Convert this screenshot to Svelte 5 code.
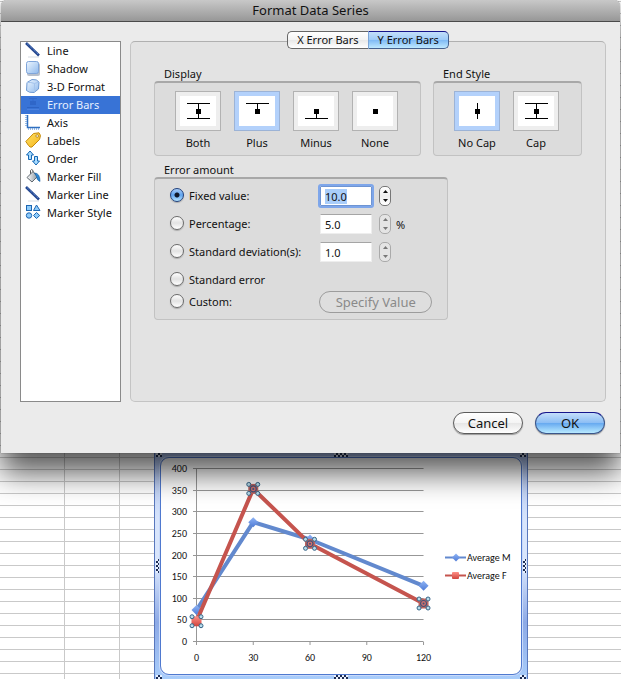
<script>
  import { onMount } from "svelte";

  const categories = ["Line", "Shadow", "3-D Format", "Error Bars", "Axis", "Labels", "Order", "Marker Fill", "Marker Line", "Marker Style"];
  const displays = ["Both", "Plus", "Minus", "None"];
  const endStyles = ["No Cap", "Cap"];

  let category = "Error Bars";
  let tab = "Y Error Bars";
  let display = "Plus";
  let endStyle = "No Cap";
  let amount = "fixed";
  let firstField;

  let rows = [
    { id: "fixed", label: "Fixed value:", value: "10.0" },
    { id: "percent", label: "Percentage:", value: "5.0", unit: "%" },
    { id: "deviation", label: "Standard deviation(s):", value: "1.0" },
    { id: "error", label: "Standard error" },
    { id: "custom", label: "Custom:" }
  ];

  const averageM = [[0, 74], [30, 277], [60, 237], [120, 130]];
  const averageF = [[0, 48], [30, 354], [60, 227], [120, 89]];
  const yTicks = [0, 50, 100, 150, 200, 250, 300, 350, 400];
  const xTicks = [0, 30, 60, 90, 120];

  const px = (v) => 35.5 + v * 1.892;
  const py = (v) => 184 - v * 0.4325;
  const toPoints = (data) => data.map(([x, y]) => `${px(x)},${py(y)}`).join(" ");

  function step(index, delta) {
    rows[index].value = (parseFloat(rows[index].value) + delta).toFixed(1);
  }

  onMount(() => {
    firstField = document.getElementById("value-fixed");
    firstField.focus();
    firstField.select();
  });
</script>

<div class="sheet">
  <div class="dialog" role="dialog" aria-labelledby="dialog-title">
    <h1 id="dialog-title">Format Data Series</h1>

    <div class="content">
      <nav class="categories">
        {#each categories as name}
          <button class="category" class:selected={category === name} on:click={() => (category = name)}>
            <svg width="16" height="16" viewBox="0 0 16 16" aria-hidden="true">
              {#if name === "Line" || name === "Marker Line"}
                <path d="M3 15h11" stroke="#d5dbe3" />
                <path d="M1 1L14 13.500" stroke="#24468f" stroke-width="2.600" />
                <path d="M2 1.500L13.500 12.500" stroke="#6c9be0" stroke-width="1" stroke-dasharray="1 1" />
              {:else if name === "Shadow"}
                <rect x="2" y="3" width="13" height="13" rx="2" fill="#b7bfcb" />
                <rect x="1.500" y="1.500" width="12" height="12" rx="2" fill="url(#pale)" stroke="#7fa5da" />
              {:else if name === "3-D Format"}
                <path d="M2 4.500L7 1.500Q12 1 14 4L13.500 11L9 14.500Q4 15 1.500 12.500Z" fill="url(#pale)" stroke="#6f9ad3" />
                <path d="M2 4.500Q6 4 9.500 5.500L9.500 14M9.500 5.500L14 4" fill="none" stroke="#a5c4ec" />
              {:else if name === "Error Bars"}
                <path d="M4 2.500h8M8 3v3" stroke="#3269cb" fill="none" />
                <rect x="5" y="5" width="6" height="4" fill="#2f66c8" />
                <path d="M2 11.500h12" stroke="#2d63c4" />
                <path d="M2 13.500h12" stroke="#4b81df" />
              {:else if name === "Axis"}
                <path d="M2.500 1v12.500H15" stroke="#2f6fc0" stroke-width="1.500" fill="none" />
                <path d="M1 1v12M3 15h12" stroke="#3b7dce" stroke-dasharray="1 1" />
              {:else if name === "Labels"}
                <path d="M.8 9.500L8.500 1.500L14 .8L15.500 3.500L14.500 7.500L7 15Q5 15.800 3.500 13.500Z" fill="url(#gold)" stroke="#c48a0c" />
                <circle cx="12.200" cy="4" r="1.300" fill="#fff" stroke="#9b6d0c" stroke-width=".7" />
              {:else if name === "Order"}
                <path d="M5 1L8.500 5H6.500V9.500H3.500V5H1.500Z" fill="#a9dcff" stroke="#1668b5" />
                <path d="M11 15L14.500 11H12.500V6.500H9.500V11H7.500Z" fill="#a9dcff" stroke="#1668b5" />
              {:else if name === "Marker Fill"}
                <path d="M5.500 6V2.500Q6.500 .5 8 2.500V6" fill="none" stroke="#555" />
                <path d="M8 3.500L12.500 8.500L7 14L2 9.500Z" fill="url(#steel)" stroke="#606970" />
                <path d="M9.500 5Q15 5 15 13.500Q11.500 12 11.500 8.500Z" fill="#2d87d2" stroke="#165b9d" stroke-width=".6" />
              {:else}
                <rect x="1.500" y="1.500" width="5" height="5" fill="#8ecbfa" stroke="#1d66b2" />
                <path d="M11.500 1L15 6.500H8.500Z" fill="#8ecbfa" stroke="#1d66b2" />
                <circle cx="4" cy="11.500" r="2.700" fill="#8ecbfa" stroke="#1d66b2" />
                <path d="M11.500 8.500L14.700 11.500L11.500 14.500L8.500 11.500Z" fill="#8ecbfa" stroke="#1d66b2" />
              {/if}
            </svg>
            {name}
          </button>
        {/each}
      </nav>

      <section class="panel">
        <div class="tabs">
          {#each ["X Error Bars", "Y Error Bars"] as name}
            <button class:active={tab === name} on:click={() => (tab = name)}>{name}</button>
          {/each}
        </div>

        <div class="groups">
          <div class="group">
            <h2>Display</h2>
            <div class="box options">
              {#each displays as name}
                <button class="option" class:chosen={display === name} aria-pressed={display === name} on:click={() => (display = name)}>
                  <span class="thumb">
                    <svg width="36" height="30" aria-hidden="true">
                      {#if name === "Both" || name === "Plus"}
                        <path d="M7 7.500h23M18.500 7v9" />
                      {/if}
                      {#if name === "Both" || name === "Minus"}
                        <path d="M7 22.500h23M18.500 15v8" />
                      {/if}
                      <rect x="16" y="13" width="5" height="5" />
                    </svg>
                  </span>
                  {name}
                </button>
              {/each}
            </div>
          </div>

          <div class="group">
            <h2>End Style</h2>
            <div class="box options">
              {#each endStyles as name}
                <button class="option" class:chosen={endStyle === name} aria-pressed={endStyle === name} on:click={() => (endStyle = name)}>
                  <span class="thumb">
                    <svg width="36" height="30" aria-hidden="true">
                      <path d="M18.500 7v16" />
                      {#if name === "Cap"}
                        <path d="M7 7.500h23M7 22.500h23" />
                      {/if}
                      <rect x="16" y="13" width="5" height="5" />
                    </svg>
                  </span>
                  {name}
                </button>
              {/each}
            </div>
          </div>
        </div>

        <div class="group">
          <h2>Error amount</h2>
          <div class="box amounts">
            {#each rows as row, i}
              <div class="row" class:tight={i > 2}>
                <label class="choice">
                  <input type="radio" name="amount" value={row.id} bind:group={amount} />
                  {row.label}
                </label>
                {#if row.value}
                  <input class="field" id="value-{row.id}" type="text" aria-label={row.label} bind:value={row.value} />
                  <span class="stepper" class:dim={amount !== row.id}>
                    <button aria-label="Increase" on:click={() => step(i, 1)}><svg width="5" height="3"><path d="M0 3L2.500 0L5 3Z" /></svg></button>
                    <button aria-label="Decrease" on:click={() => step(i, -1)}><svg width="5" height="3"><path d="M0 0L2.500 3L5 0Z" /></svg></button>
                  </span>
                {/if}
                {#if row.unit}<span class="unit">{row.unit}</span>{/if}
                {#if row.id === "custom"}
                  <button class="pill specify" disabled={amount !== "custom"}>Specify Value</button>
                {/if}
              </div>
            {/each}
          </div>
        </div>
      </section>
    </div>

    <footer>
      <button class="pill">Cancel</button>
      <button class="pill primary">OK</button>
    </footer>
  </div>

  <div class="frame">
    <i class="grip top left"></i><i class="grip top mid"></i><i class="grip top right"></i>
    <i class="grip side left"></i><i class="grip side right"></i>
    <i class="grip bottom left"></i><i class="grip bottom mid"></i><i class="grip bottom right"></i>
    <div class="chart">
      <svg width="360" height="216" viewBox="0 0 360 216" role="img" aria-label="Average M and Average F">
        <defs>
          <linearGradient id="pale" x2="1" y2="1"><stop stop-color="#edf6ff" /><stop offset="1" stop-color="#8fb9ec" /></linearGradient>
          <linearGradient id="gold" x2="1" y2="1"><stop stop-color="#ffe36a" /><stop offset="1" stop-color="#f5b316" /></linearGradient>
          <linearGradient id="steel" x2="1" y2="0"><stop stop-color="#fff" /><stop offset="1" stop-color="#8b969f" /></linearGradient>
          <linearGradient id="markM" x2="0" y2="1"><stop stop-color="#8fb4f5" /><stop offset="1" stop-color="#4f7bd6" /></linearGradient>
          <linearGradient id="markF" x2="0" y2="1"><stop stop-color="#ff8f86" /><stop offset="1" stop-color="#cf453d" /></linearGradient>
        </defs>

        <g class="axis">
          {#each yTicks as t}
            <path d="M32 {Math.round(py(t)) - 0.5}H{px(120)}" />
            <text x="26" y={py(t) + 3} text-anchor="end">{t}</text>
          {/each}
          {#each xTicks as t}
            <path d="M{px(t)} 184v3" />
            <text x={px(t)} y="203" text-anchor="middle">{t}</text>
          {/each}
          <path d="M35.500 {py(400)}V184" />
        </g>

        <polyline points={toPoints(averageM)} stroke="#6289ce" />
        {#each averageM as [x, y]}
          <path d="M{px(x)} {py(y) - 5}l5 5l-5 5l-5 -5Z" fill="url(#markM)" />
        {/each}

        <polyline points={toPoints(averageF)} stroke="#c5544e" />
        {#each averageF as [x, y], i}
          <g transform="translate({px(x)} {py(y)})">
            {#if i === 0}
              <rect x="-5" y="-5" width="10" height="10" rx="3" fill="url(#markF)" />
            {:else}
              <rect x="-5" y="-5" width="10" height="10" fill="#c0655f" />
              <circle r="3" fill="#d0706c" stroke="#42537a" stroke-width="1.200" />
              <circle r="1" fill="#42537a" />
            {/if}
            {#each [[-4.5, -4.5], [4.5, -4.5], [-4.5, 4.5], [4.5, 4.5]] as [hx, hy]}
              <circle cx={hx} cy={hy} r="2" fill="#b9dcea" stroke="#356487" />
            {/each}
          </g>
        {/each}

        <path d="M284 99.500h21" stroke="#6289ce" stroke-width="2" />
        <path d="M295 95.500l4 4l-4 4l-4 -4Z" fill="url(#markM)" />
        <text x="306" y="103">Average M</text>
        <path d="M284 117.500h21" stroke="#c5544e" stroke-width="2" />
        <rect x="291" y="114" width="7" height="7" rx="1" fill="url(#markF)" />
        <text x="306" y="121">Average F</text>
      </svg>
    </div>
  </div>
</div>

<style>
  :global(body) {
    background: #fff;
  }

  .sheet {
    min-height: 100vh;
    overflow: hidden;
    font-family: "Lucida Grande", "Noto Sans", "Open Sans", sans-serif;
    font-size: 11px;
    color: #111;
    background:
      linear-gradient(#c9c9c9, #c9c9c9) 64px 0 / 1px 100% no-repeat,
      linear-gradient(#c9c9c9, #c9c9c9) 119px 0 / 1px 100% no-repeat,
      repeating-linear-gradient(#fff 0 1px, #c9c9c9 1px 2px, #fff 2px 12px);
  }

  button,
  input {
    font: inherit;
    color: inherit;
    margin: 0;
    padding: 0;
    border: none;
    background: none;
  }

  button:focus {
    outline: none;
  }

  .dialog {
    position: relative;
    z-index: 1;
    margin: 0 1px;
    background: #ebebeb;
    border-radius: 6px 6px 0 0;
    box-shadow: 0 0 1px #333, 0 20px 30px rgba(0, 0, 0, 0.65);
  }

  h1 {
    margin: 0;
    height: 21px;
    line-height: 20px;
    font-size: 13px;
    font-weight: normal;
    text-align: center;
    border-bottom: 1px solid #4a4a4a;
    border-radius: 6px 6px 0 0;
    background: linear-gradient(#c8c8c8, #979797);
  }

  .content {
    display: flex;
    gap: 9px;
    padding: 19px 15px 0 19px;
  }

  .categories {
    flex: none;
    width: 99px;
    border: 1px solid #8a8a8a;
    background: #fff;
  }

  .category {
    display: flex;
    align-items: center;
    gap: 6px;
    width: 100%;
    height: 18px;
    padding: 0 0 2px 4px;
    white-space: nowrap;
  }

  .category.selected {
    background: #3873d6;
    color: #e6efff;
  }

  .category svg {
    flex: none;
  }

  .panel {
    position: relative;
    flex: 1;
    min-height: 333px;
    padding: 24px 23px 2px;
    background: #e3e3e3;
    border: 1px solid #c4c4c4;
    border-top-color: #b0b0b0;
    border-radius: 5px;
  }

  .tabs {
    position: absolute;
    top: -11px;
    left: 0;
    right: 0;
    display: flex;
    justify-content: center;
  }

  .tabs button {
    height: 18px;
    padding: 0 9px;
    line-height: 16px;
    border: 1px solid #666;
    border-radius: 5px 0 0 5px;
    border-right: none;
    background: linear-gradient(#fff, #f3f3f3 50%, #e8e8e8 51%, #fff);
  }

  .tabs button + button {
    border: 1px solid #44618f;
    border-top-color: #15158a;
    border-left-color: #7da6d8;
    border-radius: 0 5px 5px 0;
  }

  .tabs .active {
    background: linear-gradient(#c3dffa, #9dcbf8 50%, #7fbaf5 51%, #bfe9ff);
  }

  .groups {
    display: flex;
    gap: 12px;
    margin-bottom: 6px;
  }

  h2 {
    margin: 0 0 0 10px;
    height: 15px;
    line-height: 15px;
    font-size: 11px;
    font-weight: normal;
  }

  .box {
    background: #dcdcdc;
    border: 1px solid #c2c2c2;
    border-top: 2px solid #a8a8a8;
    border-radius: 4px;
  }

  .options {
    display: flex;
    gap: 13px;
    padding: 8px 22px 2px 20px;
  }

  .option {
    width: 46px;
    line-height: 20px;
    white-space: nowrap;
  }

  .thumb {
    display: block;
    height: 30px;
    margin-bottom: 2px;
    border: 1px solid #b2b2b2;
    padding: 4px;
    background: #eee;
  }

  .chosen .thumb {
    background: #b3d1fb;
    border-color: #9cb3d6;
  }

  .thumb svg {
    display: block;
    background: #fff;
  }

  .thumb path {
    stroke: #000;
  }

  .amounts {
    max-width: 262px;
    padding: 6px 15px;
  }

  .row {
    display: flex;
    align-items: center;
    height: 22px;
    margin-bottom: 6px;
  }

  .row.tight {
    margin-bottom: 0;
  }

  .choice {
    display: flex;
    align-items: center;
    gap: 5px;
    width: 150px;
    padding-bottom: 2px;
    white-space: nowrap;
  }

  .choice input {
    appearance: none;
    flex: none;
    width: 14px;
    height: 14px;
    border: 1px solid #6b6b6b;
    border-radius: 50%;
    background: linear-gradient(#fff, #e2e2e2 50%, #fff);
    box-shadow: 0 1px 1px #aaa;
  }

  .choice input:checked {
    border-color: #20407c;
    background: radial-gradient(#101828 0 2px, transparent 3px), linear-gradient(#a9cdf8, #5fa3ee 50%, #b5e4ff);
  }

  .field {
    width: 52px;
    height: 20px;
    box-sizing: border-box;
    padding: 0 4px;
    background: #fff;
    border: 1px solid #eee;
    border-top-color: #a5a5a5;
  }

  .field:focus {
    outline: 2px solid #7ea6ea;
    border-color: #6e94d2;
    border-radius: 1px;
  }

  .field::selection {
    background: #a9cdfa;
    color: #111;
  }

  .stepper {
    display: flex;
    flex-direction: column;
    width: 10px;
    height: 18px;
    margin-left: 7px;
    border: 1px solid #777;
    border-radius: 5px;
    background: linear-gradient(#fff, #eee 50%, #fff);
  }

  .stepper button {
    display: flex;
    flex: 1;
    align-items: center;
    justify-content: center;
  }

  .stepper.dim {
    border-color: #aaa;
    background: #e4e4e4;
    color: #777;
  }

  .stepper path {
    fill: currentColor;
  }

  .unit {
    margin-left: 5px;
  }

  .pill {
    width: 70px;
    height: 22px;
    font-size: 13px;
    line-height: 19px;
    border: 1px solid #5c5c5c;
    border-radius: 11px;
    background: linear-gradient(#fff, #f4f4f4 50%, #e6e6e6 51%, #fff);
    box-shadow: 0 1px 1px #999;
  }

  .primary {
    border-color: #3b568a;
    border-top-color: #16168c;
    background: linear-gradient(#c4defa, #8bbdf4 50%, #66a9f0 51%, #b9eaff);
  }

  .specify {
    width: 113px;
  }

  .specify:disabled {
    color: #8a8a8a;
    border-color: #9c9c9c;
    background: #dedede;
    box-shadow: none;
  }

  footer {
    display: flex;
    justify-content: flex-end;
    gap: 12px;
    padding: 10px 15px 19px;
  }

  .frame {
    position: relative;
    width: 362px;
    margin-left: 154px;
    padding: 4px 5px;
    border: solid #5877bd;
    border-width: 0 1px;
    background: linear-gradient(#a9bfee, #d8e5fc 30%, #d8e5fc 50%, #8daae6 75%, #a9cdfb);
  }

  .chart {
    border: 1px solid #4f79cf;
    border-radius: 9px;
    background: #fff;
    box-shadow: 0 0 0 1px #c9dafa;
  }

  .chart svg {
    display: block;
  }

  .chart text {
    font-family: Calibri, Carlito, Lato, sans-serif;
    font-size: 10px;
    fill: #111;
  }

  .axis path {
    stroke: #979797;
  }

  polyline {
    fill: none;
    stroke-width: 4;
    stroke-linejoin: round;
  }

  /* dotted resize grips on the chart border */
  .grip {
    position: absolute;
    width: 6px;
    height: 4px;
    background: repeating-conic-gradient(#1d2c52 0 25%, #e9f1ff 0 50%) 0 0 / 4px 4px;
  }

  .grip.top { top: 0; }
  .grip.bottom { bottom: 0; }
  .grip.left { left: 1px; }
  .grip.right { right: 1px; }

  .grip.mid {
    left: 50%;
    width: 14px;
    margin-left: -7px;
  }

  .grip.side {
    top: 50%;
    width: 3px;
    height: 14px;
    margin-top: -7px;
  }
</style>
